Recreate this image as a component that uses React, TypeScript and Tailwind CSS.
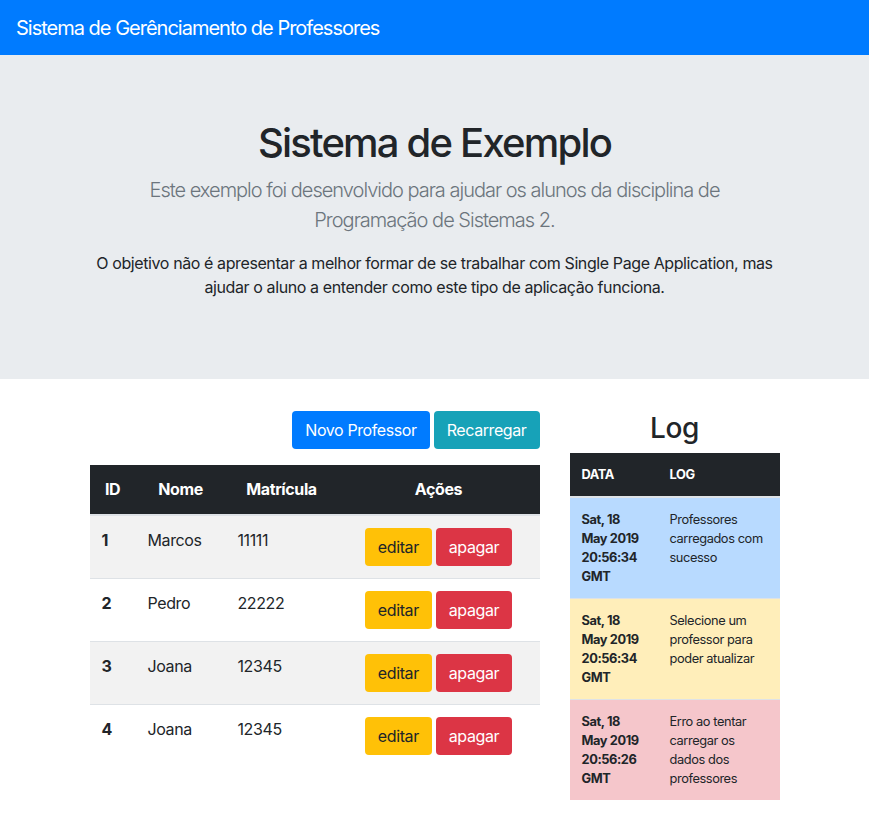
const professores = [
  { id: 1, nome: "Marcos", matricula: "11111" },
  { id: 2, nome: "Pedro", matricula: "22222" },
  { id: 3, nome: "Joana", matricula: "12345" },
  { id: 4, nome: "Joana", matricula: "12345" },
];

const logs = [
  {
    data: "Sat, 18 May 2019 20:56:34 GMT",
    msg: "Professores carregados com sucesso",
    bg: "bg-[#b8daff]",
  },
  {
    data: "Sat, 18 May 2019 20:56:34 GMT",
    msg: "Selecione um professor para poder atualizar",
    bg: "bg-[#ffeeba]",
  },
  {
    data: "Sat, 18 May 2019 20:56:26 GMT",
    msg: "Erro ao tentar carregar os dados dos professores",
    bg: "bg-[#f5c6cb]",
  },
];

const btn = "rounded border border-transparent px-3 py-1.5 leading-6";

export default function App() {
  return (
    <div className="min-h-screen bg-white text-[#212529] font-['Inter','Liberation_Sans',sans-serif] text-base leading-6 tracking-[-0.025em]">
      <nav className="h-[55px] bg-[#007bff] flex items-center px-4">
        <span className="text-white text-xl tracking-[-0.05em]">
          Sistema de Gerênciamento de Professores
        </span>
      </nav>

      <div className="bg-[#e9ecef] py-16 px-8 mb-8">
        <div className="mx-auto w-[720px] px-[15px] text-center">
          <h1 className="text-[40px] leading-[48px] font-medium mb-2 tracking-[-0.045em]">
            Sistema de Exemplo
          </h1>
          <p className="text-xl leading-[30px] font-light text-[#6c757d] mb-4 px-10 tracking-[-0.05em]">
            Este exemplo foi desenvolvido para ajudar os alunos da disciplina de
            Programação de Sistemas 2.
          </p>
          <p className="mb-4">
            O objetivo não é apresentar a melhor formar de se trabalhar com
            Single Page Application, mas ajudar o aluno a entender como este
            tipo de aplicação funciona.
          </p>
        </div>
      </div>

      <div className="mx-auto w-[720px] px-[15px] flex gap-[30px]">
        <div className="w-[450px]">
          <div className="flex justify-end gap-1 mb-4">
            <button className={`${btn} bg-[#007bff] text-white`}>
              Novo Professor
            </button>
            <button className={`${btn} bg-[#17a2b8] text-white`}>
              Recarregar
            </button>
          </div>
          <table className="w-full text-left border-collapse">
            <thead>
              <tr className="bg-[#212529] text-white border-b-2 border-[#dee2e6]">
                <th className="w-[46px] px-3 pt-3 pb-[13px] font-bold text-center">ID</th>
                <th className="w-[90px] px-3 pt-3 pb-[13px] font-bold text-center">Nome</th>
                <th className="w-[112px] px-3 pt-3 pb-[13px] font-bold text-center">Matrícula</th>
                <th className="px-3 pt-3 pb-[13px] font-bold text-center">Ações</th>
              </tr>
            </thead>
            <tbody>
              {professores.map((p, i) => (
                <tr
                  key={p.id}
                  className={`border-t border-[#dee2e6] align-top ${
                    i % 2 === 0 ? "bg-[#f2f2f2]" : "bg-white"
                  }`}
                >
                  <td className="p-3 font-bold">{p.id}</td>
                  <td className="p-3">{p.nome}</td>
                  <td className="p-3">{p.matricula}</td>
                  <td className="p-3">
                    <div className="flex justify-center gap-1">
                      <button className={`${btn} bg-[#ffc107] text-[#212529]`}>
                        editar
                      </button>
                      <button className={`${btn} bg-[#dc3545] text-white`}>
                        apagar
                      </button>
                    </div>
                  </td>
                </tr>
              ))}
            </tbody>
          </table>
        </div>

        <div className="w-[210px]">
          <h3 className="text-[28px] leading-[34px] font-medium text-center mb-2">
            Log
          </h3>
          <table className="w-full text-left border-collapse text-[12.8px] leading-[19px]">
            <thead>
              <tr className="bg-[#212529] text-white border-b-2 border-[#dee2e6]">
                <th className="w-[88px] p-3 font-bold uppercase">Data</th>
                <th className="p-3 font-bold uppercase">Log</th>
              </tr>
            </thead>
            <tbody>
              {logs.map((l, i) => (
                <tr
                  key={i}
                  className={`${l.bg} border-t border-[#dee2e6] align-top`}
                >
                  <td className="p-3 font-bold">{l.data}</td>
                  <td className="p-3">{l.msg}</td>
                </tr>
              ))}
            </tbody>
          </table>
        </div>
      </div>
    </div>
  );
}
